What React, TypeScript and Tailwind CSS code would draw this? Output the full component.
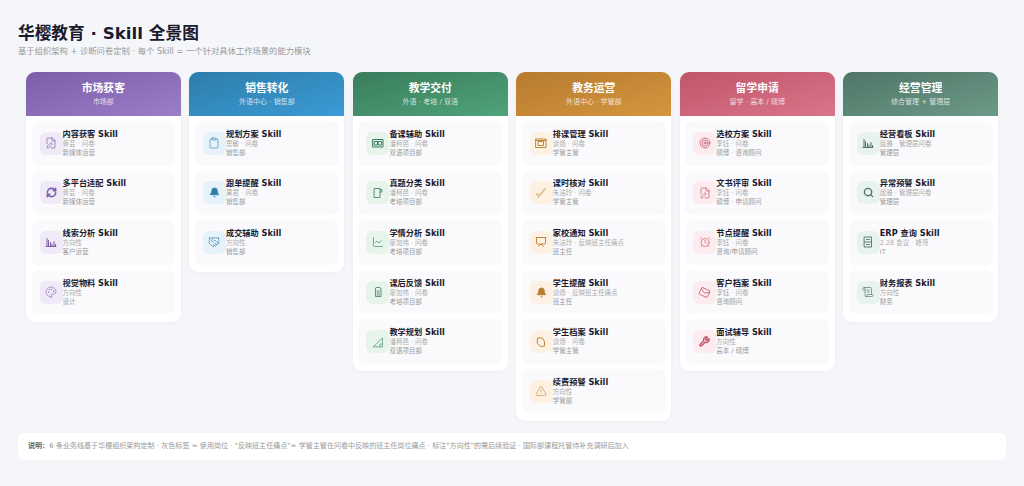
import type { ReactNode } from "react";
import {
  AlarmClock,
  Bell,
  Clipboard,
  FilePen,
  Handshake,
  Mail,
  Palette,
  Presentation,
  RefreshCw,
  ScrollText,
  Search,
  Target,
  TriangleAlert,
  Wrench,
  ChartLine,
} from "lucide-react";

const font = { fontFamily: '"DejaVu Sans", "Noto Sans CJK SC", sans-serif' };

function Glyph({ children, w = 1.2 }: { children: ReactNode; w?: number }) {
  return (
    <svg width="12" height="12" viewBox="0 0 24 24" fill="none" stroke="currentColor" strokeWidth={w} strokeLinejoin="round" strokeLinecap="round">
      {children}
    </svg>
  );
}

const Bars = () => (
  <Glyph w={2}>
    <path d="M2 21h20M4 21V5M7 21V9M11 21v-8M14 21v-5M18 21V11M21 21v-4" />
  </Glyph>
);
const BookBox = () => (
  <Glyph w={2}>
    <rect x="2" y="5" width="20" height="15" />
    <rect x="5" y="9" width="6" height="7" />
    <rect x="13" y="9" width="6" height="7" />
  </Glyph>
);
const PageTab = () => (
  <Glyph w={1.6}>
    <path d="M5 3h11v18H5zM16 5h4v5h-4" />
  </Glyph>
);
const NarrowDoc = () => (
  <Glyph w={1.6}>
    <path d="M9 3h7l2 3v15H7V5zM10 10h5M10 14h5M10 18h5" />
  </Glyph>
);
const RulerTriangle = () => (
  <Glyph w={1.2}>
    <path d="M3 21L21 4v17zM16 21v-5h3" />
  </Glyph>
);
const CalBox = () => (
  <Glyph w={1.8}>
    <rect x="2" y="4" width="20" height="17" />
    <rect x="7" y="9" width="10" height="8" />
    <path d="M2 7h20" />
  </Glyph>
);
const CheckPen = () => (
  <Glyph w={1}>
    <path d="M3 15l4 6L21 4l-2-1L8 17l-3-4z" />
  </Glyph>
);
const TagBox = () => (
  <Glyph w={1.8}>
    <path d="M6 4h9l4 7v9l-8 1-6-6z" />
  </Glyph>
);
const Cabinet = () => (
  <Glyph w={1.8}>
    <rect x="5" y="2" width="14" height="20" />
    <path d="M5 12h14M9 7h6M9 17h6" />
  </Glyph>
);

const thin = { size: 12, strokeWidth: 1.4 };

const columns = [
  {
    title: "市场获客",
    sub: "市场部",
    head: "bg-gradient-to-br from-[#7b5ea7] to-[#9b7ec8]",
    iconBox: "bg-[#f0eaf8]",
    iconText: "text-[#7b5ea7]",
    skills: [
      { icon: <FilePen {...thin} />, name: "内容获客 Skill", who: "黄芸 · 问卷", role: "新媒体运营" },
      { icon: <RefreshCw size={11} strokeWidth={3.4} />, name: "多平台适配 Skill", who: "黄芸 · 问卷", role: "新媒体运营" },
      { icon: <Bars />, name: "线索分析 Skill", who: "方向性", role: "客户运营" },
      { icon: <Palette size={12} strokeWidth={1.1} />, name: "视觉物料 Skill", who: "方向性", role: "设计" },
    ],
  },
  {
    title: "销售转化",
    sub: "外语中心 · 销售部",
    head: "bg-gradient-to-br from-[#2e7dab] to-[#3a9bd5]",
    iconBox: "bg-[#e6f2fa]",
    iconText: "text-[#2e7dab]",
    skills: [
      { icon: <Clipboard size={12} strokeWidth={1.2} />, name: "规划方案 Skill", who: "思敏 · 问卷", role: "销售部" },
      { icon: <Bell size={11} fill="currentColor" strokeWidth={1.6} />, name: "跟单提醒 Skill", who: "果君 · 问卷", role: "销售部" },
      { icon: <Handshake size={12} strokeWidth={1.2} />, name: "成交辅助 Skill", who: "方向性", role: "销售部" },
    ],
  },
  {
    title: "教学交付",
    sub: "外语 · 考培 / 双语",
    head: "bg-gradient-to-br from-[#3a7d5c] to-[#4fa37a]",
    iconBox: "bg-[#e6f4ec]",
    iconText: "text-[#3a7d5c]",
    skills: [
      { icon: <BookBox />, name: "备课辅助 Skill", who: "潘柯邑 · 问卷", role: "双语项目部" },
      { icon: <PageTab />, name: "真题分类 Skill", who: "潘柯邑 · 问卷", role: "考培项目部" },
      { icon: <ChartLine size={12} strokeWidth={1.3} />, name: "学情分析 Skill", who: "廖加伟 · 问卷", role: "考培项目部" },
      { icon: <NarrowDoc />, name: "课后反馈 Skill", who: "廖加伟 · 问卷", role: "考培项目部" },
      { icon: <RulerTriangle />, name: "教学规划 Skill", who: "潘柯邑 · 问卷", role: "双语项目部" },
    ],
  },
  {
    title: "教务运营",
    sub: "外语中心 · 学管部",
    head: "bg-gradient-to-br from-[#b87a2e] to-[#d4973f]",
    iconBox: "bg-[#fdf1e3]",
    iconText: "text-[#b87a2e]",
    skills: [
      { icon: <CalBox />, name: "排课管理 Skill", who: "谈炀 · 问卷", role: "学管主管" },
      { icon: <CheckPen />, name: "课时核对 Skill", who: "朱洁玲 · 问卷", role: "学管主管" },
      { icon: <Presentation size={12} strokeWidth={1.8} />, name: "家校通知 Skill", who: "朱洁玲 · 反映班主任痛点", role: "班主任" },
      { icon: <Bell size={11} fill="currentColor" strokeWidth={1.6} />, name: "学生提醒 Skill", who: "谈炀 · 反映班主任痛点", role: "班主任" },
      { icon: <TagBox />, name: "学生档案 Skill", who: "谈炀 · 问卷", role: "学管主管" },
      { icon: <TriangleAlert size={12} strokeWidth={1.1} />, name: "续费预警 Skill", who: "方向性", role: "学管部" },
    ],
  },
  {
    title: "留学申请",
    sub: "留学 · 高本 / 硕博",
    head: "bg-gradient-to-br from-[#c0566a] to-[#d9758a]",
    iconBox: "bg-[#fdecef]",
    iconText: "text-[#c0566a]",
    skills: [
      { icon: <Target size={12} strokeWidth={1.6} />, name: "选校方案 Skill", who: "李钰 · 问卷", role: "硕博 · 咨询顾问" },
      { icon: <FilePen {...thin} />, name: "文书评审 Skill", who: "李钰 · 问卷", role: "硕博 · 申请顾问" },
      { icon: <AlarmClock size={12} strokeWidth={1.3} />, name: "节点提醒 Skill", who: "李钰 · 问卷", role: "咨询/申请顾问" },
      { icon: <Mail size={11} strokeWidth={1.6} className="rotate-[25deg]" />, name: "客户档案 Skill", who: "李钰 · 问卷", role: "咨询顾问" },
      { icon: <Wrench size={11} strokeWidth={3} />, name: "面试辅导 Skill", who: "方向性", role: "高本 / 硕博" },
    ],
  },
  {
    title: "经营管理",
    sub: "综合管理 + 管理层",
    head: "bg-gradient-to-br from-[#4f7566] to-[#6d9a88]",
    iconBox: "bg-[#e9f3ed]",
    iconText: "text-[#4f7566]",
    skills: [
      { icon: <Bars />, name: "经营看板 Skill", who: "屈雅 · 管理层问卷", role: "管理层" },
      { icon: <Search size={11} strokeWidth={3} />, name: "异常预警 Skill", who: "屈雅 · 管理层问卷", role: "管理层" },
      { icon: <Cabinet />, name: "ERP 查询 Skill", who: "2.28 会议 · 峰哥", role: "IT" },
      { icon: <ScrollText size={12} strokeWidth={1.3} />, name: "财务报表 Skill", who: "方向性", role: "财务" },
    ],
  },
];

export default function App() {
  return (
    <div className="min-h-[486px] bg-[#f5f6fa] px-[18px] pt-[22px] text-[#1a1a2e]" style={font}>
      <h1 className="text-[16.7px] font-bold leading-[22px]">华樱教育 · Skill 全景图</h1>
      <p className="mt-[2px] text-[8.3px] leading-[11px] text-[#999]">
        基于组织架构 + 诊断问卷定制 · 每个 Skill = 一个针对具体工作场景的能力模块
      </p>

      <div className="mt-[15px] flex items-start gap-[8.7px] px-[8px]">
        {columns.map((col) => (
          <div key={col.title} className="flex-1 overflow-hidden rounded-[9px] bg-white shadow-[0_1px_4px_rgba(0,0,0,0.03)]">
            <div className={`h-[44px] pt-[9px] text-center text-white ${col.head}`}>
              <div className="text-[10.8px] font-bold leading-[15px]">{col.title}</div>
              <div className="text-[7px] leading-[12px] opacity-75">{col.sub}</div>
            </div>
            <div className="flex flex-col gap-[5.1px] px-[5.5px] pt-[5px] pb-[7.5px]">
              {col.skills.map((s) => (
                <div key={s.name} className="flex h-[44.5px] items-center rounded-[7px] bg-[#fafafd] pl-[8px]">
                  <div className={`flex h-[23px] w-[23px] shrink-0 items-center justify-center rounded-[6px] ${col.iconBox} ${col.iconText}`}>
                    {s.icon}
                  </div>
                  <div className="min-w-0 whitespace-nowrap">
                    <div className="text-[8.2px] font-bold leading-[10px]">{s.name}</div>
                    <div className="mt-[1px] text-[6.5px] leading-[9px] text-[#aaa]">{s.who}</div>
                    <div className="text-[6.5px] leading-[9px] text-[#999]">{s.role}</div>
                  </div>
                </div>
              ))}
            </div>
          </div>
        ))}
      </div>

      <div className="mt-[12px] flex h-[27px] items-center rounded-[6px] bg-white px-[10px] text-[7.05px] whitespace-nowrap text-[#999]">
        <span><b className="text-[#666]">说明：</b>6 条业务线基于华樱组织架构定制 · 灰色标签 = 使用岗位 · "反映班主任痛点"= 学管主管在问卷中反映的班主任岗位痛点 · 标注"方向性"的需后续验证 · 国际部课程托管待补充调研后加入</span>
      </div>
    </div>
  );
}
